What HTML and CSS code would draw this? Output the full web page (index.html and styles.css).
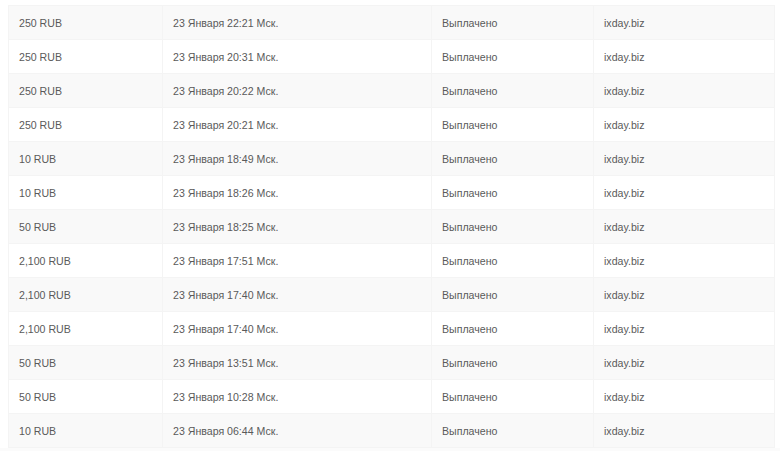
FILE: index.html
```html
<!DOCTYPE html>
<html lang="ru">
<head>
    <meta charset="UTF-8">
    <title>Выплаты</title>
    <link rel="stylesheet" href="styles.css">
</head>
<body>
    <div class="payouts">
        <table class="payouts-table">
            <tbody>
                <tr><td>250 RUB</td><td>23 Января 22:21 Мск.</td><td>Выплачено</td><td>ixday.biz</td></tr>
                <tr><td>250 RUB</td><td>23 Января 20:31 Мск.</td><td>Выплачено</td><td>ixday.biz</td></tr>
                <tr><td>250 RUB</td><td>23 Января 20:22 Мск.</td><td>Выплачено</td><td>ixday.biz</td></tr>
                <tr><td>250 RUB</td><td>23 Января 20:21 Мск.</td><td>Выплачено</td><td>ixday.biz</td></tr>
                <tr><td>10 RUB</td><td>23 Января 18:49 Мск.</td><td>Выплачено</td><td>ixday.biz</td></tr>
                <tr><td>10 RUB</td><td>23 Января 18:26 Мск.</td><td>Выплачено</td><td>ixday.biz</td></tr>
                <tr><td>50 RUB</td><td>23 Января 18:25 Мск.</td><td>Выплачено</td><td>ixday.biz</td></tr>
                <tr><td>2,100 RUB</td><td>23 Января 17:51 Мск.</td><td>Выплачено</td><td>ixday.biz</td></tr>
                <tr><td>2,100 RUB</td><td>23 Января 17:40 Мск.</td><td>Выплачено</td><td>ixday.biz</td></tr>
                <tr><td>2,100 RUB</td><td>23 Января 17:40 Мск.</td><td>Выплачено</td><td>ixday.biz</td></tr>
                <tr><td>50 RUB</td><td>23 Января 13:51 Мск.</td><td>Выплачено</td><td>ixday.biz</td></tr>
                <tr><td>50 RUB</td><td>23 Января 10:28 Мск.</td><td>Выплачено</td><td>ixday.biz</td></tr>
                <tr><td>10 RUB</td><td>23 Января 06:44 Мск.</td><td>Выплачено</td><td>ixday.biz</td></tr>
            </tbody>
        </table>
    </div>
</body>
</html>
```

FILE: styles.css
```css
body {
    margin: 0;
    background-color: #fbfbfb;
    font-family: "Liberation Sans", Arial, sans-serif;
    color: #5a5a5a;
}
.payouts {
    padding: 5px 5px 0 8px;
    background-color: #fff;
}
.payouts-table {
    width: 767px;
    border-collapse: collapse;
    table-layout: fixed;
    font-size: 10.6px;
}
.payouts-table td {
    height: 33px;
    padding: 0 10px;
    border: 1px solid #f4f4f4;
    white-space: nowrap;
}
.payouts-table td:nth-child(1) { width: 133px; }
.payouts-table td:nth-child(2) { width: 248px; }
.payouts-table td:nth-child(3) { width: 141px; }
.payouts-table tr:nth-child(odd) {
    background-color: #f9f9f9;
}
```
